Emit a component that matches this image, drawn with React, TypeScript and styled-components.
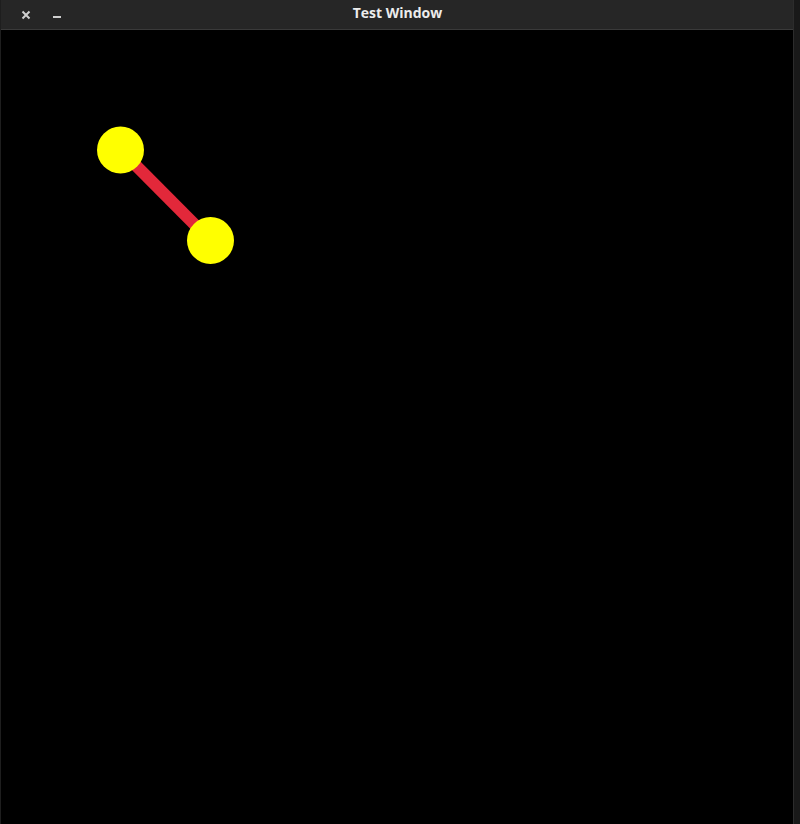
import React, { ReactElement } from "react"
import styled, { createGlobalStyle } from "styled-components"

const GlobalStyle = createGlobalStyle`
	html, body {
		margin: 0;
		padding: 0;
		background: #141414;
		overflow: hidden;
	}
	#root {
		height: 824px;
	}
`

const Desktop = styled.div`
	display: flex;
	height: 824px;
	width: 800px;
`

const Window = styled.div`
	flex: 1;
	display: flex;
	flex-direction: column;
	background: #000;
	border-left: 1px solid #1e1e1e;
`

const TitleBar = styled.div`
	height: 29px;
	min-height: 29px;
	display: grid;
	grid-template-columns: 1fr auto 1fr;
	align-items: center;
	background: #262626;
	border-bottom: 1px solid #3a3a3a;
	font-family: "Open Sans", "DejaVu Sans", sans-serif;
`

const Controls = styled.div`
	display: flex;
	align-items: center;
	gap: 19px;
	padding-left: 19px;
`

const ControlButton = styled.button`
	width: 12px;
	height: 12px;
	padding: 0;
	border: none;
	background: transparent;
	display: flex;
	align-items: center;
	justify-content: center;
	cursor: pointer;
`

const Title = styled.div`
	color: #ececec;
	font-size: 14px;
	font-weight: 700;
	padding-left: 1px;
	padding-bottom: 4px;
`

const Canvas = styled.div`
	flex: 1;
	background: #000;
`

const Edge = styled.div`
	width: 7px;
	background: #191919;
	border-left: 1px solid #2c2c2c;
`

const nodes = [
	{ x: 119.5, y: 120 },
	{ x: 209.5, y: 210.5 },
]

export default function App(): ReactElement {
	return (
		<>
			<GlobalStyle />
			<Desktop>
				<Window>
					<TitleBar>
						<Controls>
							<ControlButton aria-label="close">
								<svg width="10" height="10" viewBox="0 0 10 10">
									<path
										d="M1.5 1.5 L8.5 8.5 M8.5 1.5 L1.5 8.5"
										stroke="#cfcfcf"
										strokeWidth="2"
									/>
								</svg>
							</ControlButton>
							<ControlButton aria-label="minimize">
								<svg width="10" height="10" viewBox="0 0 10 10">
									<rect x="1" y="6" width="8" height="2" fill="#cfcfcf" />
								</svg>
							</ControlButton>
						</Controls>
						<Title>Test Window</Title>
						<div />
					</TitleBar>
					<Canvas>
						<svg width="792" height="794">
							<line
								x1={nodes[0].x}
								y1={nodes[0].y}
								x2={nodes[1].x}
								y2={nodes[1].y}
								stroke="#e2283a"
								strokeWidth="12"
							/>
							{nodes.map((n, i) => (
								<circle key={i} cx={n.x} cy={n.y} r="23.5" fill="#ffff00" />
							))}
						</svg>
					</Canvas>
				</Window>
				<Edge />
			</Desktop>
		</>
	)
}
